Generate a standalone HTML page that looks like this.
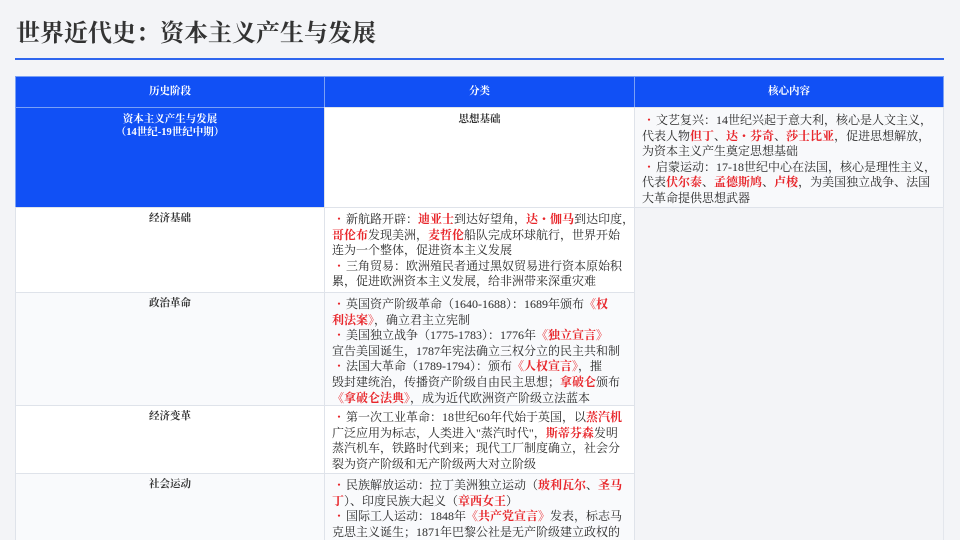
<!DOCTYPE html>
<html><head><meta charset="utf-8"><style>
html,body{margin:0;width:960px;height:540px;overflow:hidden}
body{background:#f3f4f7;font-family:"Liberation Serif","Noto Serif CJK SC",serif;color:#333;position:relative}
h1{position:absolute;left:16px;top:15px;margin:0;font-size:24px;font-weight:bold;color:#333;font-family:"Noto Serif CJK SC",serif;line-height:32px}
.line{position:absolute;left:15px;top:58px;width:929px;height:2px;background:#2f66ee}
.c{position:absolute;box-sizing:border-box;border:1px solid #dfe3ea;font-size:12px;line-height:15.6px;overflow:hidden}
.h{background:#1150f5;color:#fff;font-weight:bold;text-align:center;font-size:10.5px;border-color:#7aa0f5}
.lab{text-align:center;font-weight:bold;font-size:10.5px;padding-top:3px;background:#fff}
.txt{padding:4px 0 0 7px;background:#fff;color:#2a2a2a;white-space:nowrap}
.alt{background:#f9fafc}
.r{color:#e8262b;font-weight:bold}
.d{color:#e8262b;font-weight:bold}
.b{color:#e8262b;display:inline-block;width:14px;text-align:center}
</style></head><body>
<h1>世界近代史：资本主义产生与发展</h1>
<div class="line"></div>
<div class="c h" style="left:15px;top:76px;width:310px;height:32px;line-height:30px">历史阶段</div>
<div class="c h" style="left:324px;top:76px;width:311px;height:32px;line-height:30px">分类</div>
<div class="c h" style="left:634px;top:76px;width:310px;height:32px;line-height:30px">核心内容</div>
<div class="c h" style="left:15px;top:107px;width:310px;height:101px;line-height:13px;padding-top:5px">资本主义产生与发展<br>（14世纪-19世纪中期）</div>
<div class="c lab" style="left:324px;top:107px;width:311px;height:101px;line-height:13px;padding-top:5px">思想基础</div>
<div class="c txt" style="left:634px;top:107px;width:310px;height:101px;background:#f8f9fb;padding-top:5px"><span class="b">・</span>文艺复兴：14世纪兴起于意大利，核心是人文主义，<br>代表人物<span class="r">但丁</span>、<span class="r">达・芬奇</span>、<span class="r">莎士比亚</span>，促进思想解放，<br>为资本主义产生奠定思想基础<br><span class="b">・</span>启蒙运动：17-18世纪中心在法国，核心是理性主义，<br>代表<span class="r">伏尔泰</span>、<span class="r">孟德斯鸠</span>、<span class="r">卢梭</span>，为美国独立战争、法国<br>大革命提供思想武器</div>

<div class="c lab" style="left:15px;top:207px;width:310px;height:86px">经济基础</div>
<div class="c txt" style="left:324px;top:207px;width:311px;height:86px"><span class="b">・</span>新航路开辟：<span class="r">迪亚士</span>到达好望角，<span class="r">达・伽马</span>到达印度，<br><span class="r">哥伦布</span>发现美洲，<span class="r">麦哲伦</span>船队完成环球航行，世界开始<br>连为一个整体，促进资本主义发展<br><span class="b">・</span>三角贸易：欧洲殖民者通过黑奴贸易进行资本原始积<br>累，促进欧洲资本主义发展，给非洲带来深重灾难</div>

<div class="c lab alt" style="left:15px;top:292px;width:310px;height:114px">政治革命</div>
<div class="c txt alt" style="left:324px;top:292px;width:311px;height:114px"><span class="b">・</span>英国资产阶级革命（1640-1688）：1689年颁布<span class="d">《权</span><br><span class="d">利法案》</span>，确立君主立宪制<br><span class="b">・</span>美国独立战争（1775-1783）：1776年<span class="d">《独立宣言》</span><br>宣告美国诞生，1787年宪法确立三权分立的民主共和制<br><span class="b">・</span>法国大革命（1789-1794）：颁布<span class="d">《人权宣言》</span>，摧<br>毁封建统治，传播资产阶级自由民主思想；<span class="r">拿破仑</span>颁布<br><span class="d">《拿破仑法典》</span>，成为近代欧洲资产阶级立法蓝本</div>

<div class="c lab" style="left:15px;top:405px;width:310px;height:69px">经济变革</div>
<div class="c txt" style="left:324px;top:405px;width:311px;height:69px"><span class="b">・</span>第一次工业革命：18世纪60年代始于英国，以<span class="r">蒸汽机</span><br>广泛应用为标志，人类进入"蒸汽时代"，<span class="r">斯蒂芬森</span>发明<br>蒸汽机车，铁路时代到来；现代工厂制度确立，社会分<br>裂为资产阶级和无产阶级两大对立阶级</div>

<div class="c lab alt" style="left:15px;top:473px;width:310px;height:80px">社会运动</div>
<div class="c txt alt" style="left:324px;top:473px;width:311px;height:80px"><span class="b">・</span>民族解放运动：拉丁美洲独立运动（<span class="r">玻利瓦尔</span>、<span class="r">圣马</span><br><span class="r">丁</span>）、印度民族大起义（<span class="r">章西女王</span>）<br><span class="b">・</span>国际工人运动：1848年<span class="d">《共产党宣言》</span>发表，标志马<br>克思主义诞生；1871年巴黎公社是无产阶级建立政权的<br>伟大尝试</div>
<div style="position:absolute;left:943px;top:207px;width:1px;height:340px;background:#e3e6ec"></div>
</body></html>
